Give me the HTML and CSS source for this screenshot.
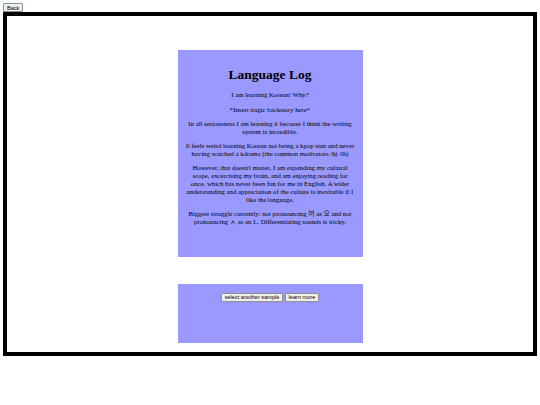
FILE: index.html
```html
<!DOCTYPE html>
<html lang="en">
<head>
<meta charset="utf-8">
<title>Language Log</title>
<link rel="stylesheet" href="styles.css">
</head>
<body>
<button class="btn back">Back</button>
<div class="frame">
  <section class="panel log">
    <h1 class="title">Language Log</h1>
    <p>I am learning Korean! Why?</p>
    <p>*Insert tragic backstory here*</p>
    <p>In all seriousness I am learning it because I think the writing system is incredible.</p>
    <p>It feels weird learning Korean not being a kpop stan and never having watched a kdrama (the common motivators /hj /lh)</p>
    <p>However, that doesn't matter, I am expanding my cultural scope, excercising my brain, and am enjoying reading for once, which has never been fun for me in English. A wider understanding and appreciation of the culture is inevitable if I like the language.</p>
    <p>Biggest struggle currently: not pronouncing 어 as 오 and not pronouncing ㅅ as an L. Differentiating sounds is tricky.</p>
  </section>
  <section class="panel actions">
    <button class="btn">select another sample</button>
    <button class="btn">learn more</button>
  </section>
</div>
</body>
</html>
```

FILE: styles.css
```css
html, body {
  background: #ffffff;
}
body {
  margin: 3.4px;
  font-family: "Liberation Serif", "Noto Sans CJK KR", serif;
  color: #000;
}
.btn {
  font-family: "Liberation Sans", Arial, sans-serif;
  font-size: 5.6px;
  line-height: 6.5px;
  padding: 0.5px 2.6px;
  margin: 0;
  background: #efefef;
  border: 0.6px solid #8f8f8f;
  border-radius: 1px;
  color: #000;
}
.back {
  display: block;
  height: 8.8px;
}
.frame {
  border: 4.2px solid #000;
  height: 344px;
  padding-top: 34px;
  box-sizing: border-box;
  display: flex;
  flex-direction: column;
  align-items: center;
  gap: 27px;
}
.panel {
  width: 185px;
  background: #9999ff;
  box-sizing: border-box;
  padding: 8.4px 7px;
  text-align: center;
}
.log {
  height: 207px;
  font-size: 6.75px;
  line-height: 7.8px;
}
.log p {
  margin: 6.6px 0;
}
.title {
  font-size: 13.5px;
  line-height: 15.5px;
  font-weight: bold;
  margin: 8.6px 0;
}
.actions {
  height: 59px;
  flex-shrink: 0;
  display: flex;
  justify-content: center;
  align-items: flex-start;
  gap: 2px;
}
.actions .btn {
  height: 9px;
}
```
